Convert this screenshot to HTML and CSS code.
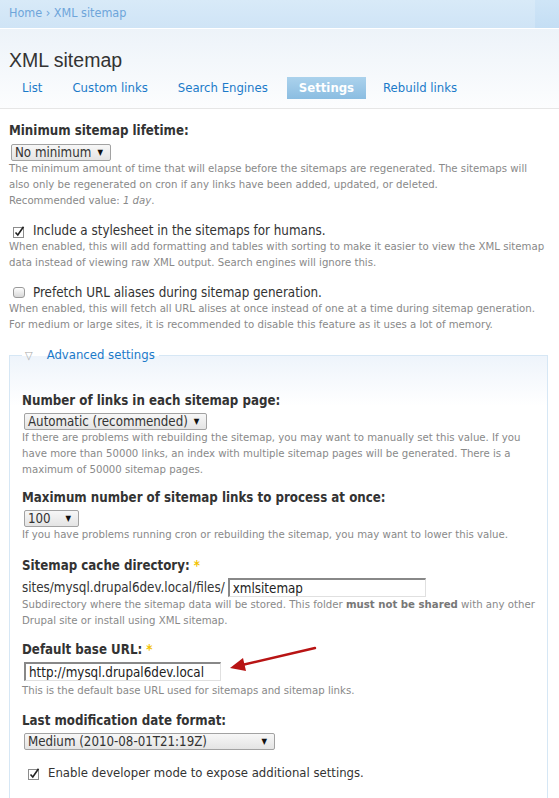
FILE: index.html
```html
<!DOCTYPE html>
<html lang="en">

<head>
    <meta charset="UTF-8">
    <title>XML sitemap</title>
    <link rel="stylesheet" href="styles.css">
</head>

<body>
    <div class="breadcrumb-bar">
        <div class="breadcrumb"><a href="#">Home</a> › <a href="#">XML sitemap</a></div>
        <div class="breadcrumb-edge"></div>
    </div>

    <div class="page-header">
        <h1 class="page-title">XML sitemap</h1>
        <ul class="tabs">
            <li><a href="#">List</a></li>
            <li><a href="#">Custom links</a></li>
            <li><a href="#">Search Engines</a></li>
            <li class="active"><a href="#">Settings</a></li>
            <li><a href="#">Rebuild links</a></li>
        </ul>
    </div>

    <div class="content">
        <div class="form-item">
            <label class="form-label">Minimum sitemap lifetime:</label>
            <div class="select select-lifetime"><span>No minimum</span><span class="arrow">▼</span></div>
            <div class="description">The minimum amount of time that will elapse before the sitemaps are regenerated. The sitemaps will also only be regenerated on cron if any links have been added, updated, or deleted.<br>Recommended value: <em>1 day</em>.</div>
        </div>

        <div class="form-item">
            <div class="checkbox-row">
                <span class="checkbox checked"><svg width="12" height="12" viewBox="0 0 12 12"><rect x="0.5" y="1.5" width="10" height="10" fill="#fff" stroke="#8c8c8c"/><path d="M2.5 6.5 L4.8 9 L10.5 0.8" fill="none" stroke="#222" stroke-width="1.6"/></svg></span>
                <span>Include a stylesheet in the sitemaps for humans.</span>
            </div>
            <div class="description">When enabled, this will add formatting and tables with sorting to make it easier to view the XML sitemap data instead of viewing raw XML output. Search engines will ignore this.</div>
        </div>

        <div class="form-item">
            <div class="checkbox-row">
                <span class="checkbox unchecked"></span>
                <span>Prefetch URL aliases during sitemap generation.</span>
            </div>
            <div class="description">When enabled, this will fetch all URL alises at once instead of one at a time during sitemap generation. For medium or large sites, it is recommended to disable this feature as it uses a lot of memory.</div>
        </div>

        <fieldset class="fieldset">
            <legend><span class="legend-arrow">▽</span><a href="#">Advanced settings</a></legend>

            <div class="form-item">
                <label class="form-label">Number of links in each sitemap page:</label>
                <div class="select select-chunk"><span>Automatic (recommended)</span><span class="arrow">▼</span></div>
                <div class="description">If there are problems with rebuilding the sitemap, you may want to manually set this value. If you have more than 50000 links, an index with multiple sitemap pages will be generated. There is a maximum of 50000 sitemap pages.</div>
            </div>

            <div class="form-item">
                <label class="form-label">Maximum number of sitemap links to process at once:</label>
                <div class="select select-batch"><span>100</span><span class="arrow">▼</span></div>
                <div class="description">If you have problems running cron or rebuilding the sitemap, you may want to lower this value.</div>
            </div>

            <div class="form-item item-directory">
                <label class="form-label">Sitemap cache directory: <span class="required">*</span></label>
                <div class="prefix-row">
                    <span>sites/mysql.drupal6dev.local/files/</span>
                    <input class="text-input input-path" type="text" value="xmlsitemap">
                </div>
                <div class="description">Subdirectory where the sitemap data will be stored. This folder <strong>must not be shared</strong> with any other Drupal site or install using XML sitemap.</div>
            </div>

            <div class="form-item item-url">
                <label class="form-label">Default base URL: <span class="required">*</span></label>
                <input class="text-input input-url" type="text" value="http://mysql.drupal6dev.local">
                <div class="description">This is the default base URL used for sitemaps and sitemap links.</div>
            </div>

            <div class="form-item item-date">
                <label class="form-label">Last modification date format:</label>
                <div class="select select-date"><span>Medium (2010-08-01T21:19Z)</span><span class="arrow">▼</span></div>
            </div>

            <div class="form-item">
                <div class="checkbox-row">
                    <span class="checkbox checked"><svg width="12" height="12" viewBox="0 0 12 12"><rect x="0.5" y="1.5" width="10" height="10" fill="#fff" stroke="#8c8c8c"/><path d="M2.5 6.5 L4.8 9 L10.5 0.8" fill="none" stroke="#222" stroke-width="1.6"/></svg></span>
                    <span>Enable developer mode to expose additional settings.</span>
                </div>
            </div>
        </fieldset>
    </div>

    <!-- annotation arrow pointing at the base URL field -->
    <svg class="annotation" width="90" height="30" viewBox="0 0 90 30">
        <line x1="87" y1="3" x2="14" y2="20" stroke="#b81414" stroke-width="2.4" stroke-linecap="round"/>
        <polygon points="2,23 15,13 18,26" fill="#b81414"/>
    </svg>
</body>

</html>
```

FILE: styles.css
```css
body {
    margin: 0;
    padding: 0;
    font-family: "DejaVu Sans Condensed", "DejaVu Sans", sans-serif;
    color: #333;
    background-color: #fff;
    position: relative;
    overflow: hidden;
    height: 798px;
}

a {
    text-decoration: none;
}

.breadcrumb-bar {
    height: 28px;
    background: linear-gradient(#d8eaf8, #cfe4f6);
    border-bottom: 1px solid #fff;
    display: flex;
    justify-content: space-between;
}

.breadcrumb {
    padding-left: 9px;
    line-height: 25px;
    font-size: 12.5px;
    color: #6ea5da;
}

.breadcrumb a {
    color: #6ea5da;
}

.breadcrumb-edge {
    width: 24px;
    background: linear-gradient(#cfe5f7, #c4def4);
}

.page-header {
    height: 79px;
    background: linear-gradient(#edf3f9, #fcfdfe);
    border-bottom: 1px solid #e6e6e6;
    padding-left: 9px;
}

.page-title {
    margin: 0;
    padding-top: 19px;
    font-family: "Liberation Sans", Arial, sans-serif;
    font-weight: normal;
    font-size: 19.5px;
    line-height: 24px;
    color: #333;
}

.tabs {
    list-style: none;
    margin: 5px 0 0 0;
    padding: 0;
    display: flex;
}

.tabs li a {
    display: block;
    height: 22px;
    line-height: 22px;
    padding: 0 13px;
    margin-right: 4px;
    font-size: 13px;
    color: #1b7ac9;
}

.tabs li.active a {
    background: linear-gradient(#abd2ec, #8bbde1);
    color: #fff;
    font-weight: bold;
    padding: 0 12px;
    margin-left: 2px;
}

.content {
    padding: 14px 11px 0 9px;
}

.form-item {
    margin-bottom: 13px;
}

.form-label {
    display: block;
    font-weight: bold;
    font-size: 13.2px;
    line-height: 16px;
    margin-bottom: 5px;
    color: #333;
}

.required {
    color: #f2c200;
}

.description {
    font-size: 11.3px;
    line-height: 16px;
    color: #898989;
}

.description strong {
    color: #777;
}

.select {
    display: flex;
    justify-content: space-between;
    align-items: center;
    box-sizing: border-box;
    height: 17px;
    margin-left: 2px;
    padding: 0 7px 0 3px;
    border: 1px solid #a2a2a2;
    border-radius: 2px;
    background: linear-gradient(#f7f7f7, #e4e4e4);
    font-size: 13.2px;
    white-space: nowrap;
    color: #333;
}

.select .arrow {
    font-size: 8px;
    color: #111;
    margin-left: 6px;
}

.select-lifetime {
    width: 100px;
}

.select-chunk {
    width: 183px;
}

.select-batch {
    width: 55px;
}

.select-date {
    width: 251px;
}

.checkbox-row {
    display: flex;
    align-items: center;
    gap: 8px;
    font-size: 13.3px;
    line-height: 17px;
    color: #333;
    padding-left: 4px;
}

.checkbox {
    display: inline-block;
    width: 12px;
    height: 12px;
}

.checkbox.unchecked {
    box-sizing: border-box;
    width: 12px;
    height: 11px;
    border: 1px solid #9a9a9a;
    border-radius: 3px;
    background: linear-gradient(#fdfdfd, #d8d8d8);
}

.fieldset {
    margin: 14px 0 0 0;
    padding: 29px 8px 0 12px;
    border: 1px solid #d6e7f5;
    border-bottom: none;
    background: linear-gradient(#eef4fb, #fff 50px);
    min-height: 460px;
}

.fieldset .form-item {
    margin-bottom: 12px;
}

.fieldset .form-label {
    margin-bottom: 4px;
}

.fieldset .item-directory {
    margin-top: 15px;
    margin-bottom: 13px;
}

.fieldset .item-url {
    margin-bottom: 14px;
}

.fieldset .item-date {
    margin-bottom: 14px;
}

.fieldset legend {
    padding: 0 4px 0 3px;
    font-size: 13px;
    line-height: 16px;
}

.fieldset legend a {
    color: #1b7ac9;
}

.legend-arrow {
    color: #aaa;
    font-size: 11px;
    margin-right: 14px;
}

.prefix-row {
    display: flex;
    align-items: center;
    gap: 3px;
    font-size: 13.3px;
    color: #333;
}

.text-input {
    box-sizing: border-box;
    height: 19px;
    padding: 0 3px;
    border: 2px solid #888;
    border-right-color: #e0e0e0;
    border-bottom-color: #e0e0e0;
    border-right-width: 1px;
    border-bottom-width: 1px;
    font-family: "DejaVu Sans Condensed", "DejaVu Sans", sans-serif;
    font-size: 13.3px;
    color: #222;
    background: #fff;
}

.input-path {
    width: 198px;
}

.input-url {
    display: block;
    margin: 0 0 2px 2px;
    width: 197px;
}

.fieldset .checkbox-row {
    padding-left: 6px;
    font-size: 13px;
}

.annotation {
    position: absolute;
    left: 228px;
    top: 645px;
}
```
